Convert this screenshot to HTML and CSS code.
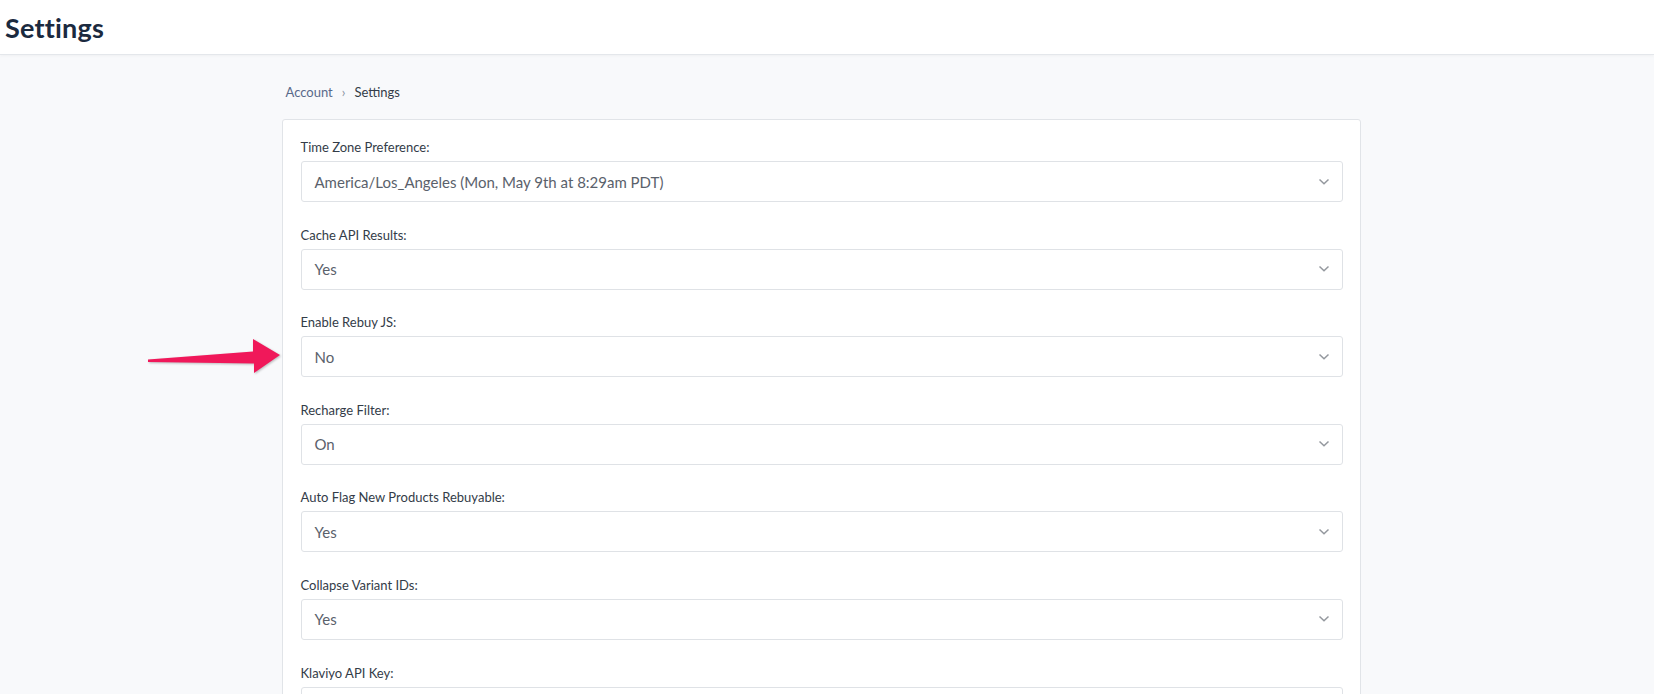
FILE: index.html
```html
<!DOCTYPE html>
<html lang="en">

<head>
    <meta charset="UTF-8">
    <meta name="viewport" content="width=device-width, initial-scale=1.0">
    <title>Settings</title>
    <link rel="stylesheet" href="styles.css">
</head>

<body>
    <header class="top-bar">
        <h1 class="page-title">Settings</h1>
    </header>

    <main class="main">
        <div class="content">

            <nav class="breadcrumb">
                <a href="#" class="crumb-link">Account</a>
                <span class="crumb-sep">&rsaquo;</span>
                <span class="crumb-current">Settings</span>
            </nav>

            <div class="card">
                <form action="#" class="settings-form">

                    <div class="field">
                        <label class="field-label">Time Zone Preference:</label>
                        <div class="select">
                            <span class="select-value">America/Los_Angeles (Mon, May 9th at 8:29am PDT)</span>
                            <svg class="chevron" viewBox="0 0 12 8" width="12" height="8"><path d="M1.5 1.5 L6 5.8 L10.5 1.5" /></svg>
                        </div>
                    </div>

                    <div class="field">
                        <label class="field-label">Cache API Results:</label>
                        <div class="select">
                            <span class="select-value">Yes</span>
                            <svg class="chevron" viewBox="0 0 12 8" width="12" height="8"><path d="M1.5 1.5 L6 5.8 L10.5 1.5" /></svg>
                        </div>
                    </div>

                    <div class="field">
                        <label class="field-label">Enable Rebuy JS:</label>
                        <div class="select">
                            <span class="select-value">No</span>
                            <svg class="chevron" viewBox="0 0 12 8" width="12" height="8"><path d="M1.5 1.5 L6 5.8 L10.5 1.5" /></svg>
                        </div>
                        <!-- annotation arrow pointing at this field -->
                        <svg class="arrow" viewBox="0 0 140 40" width="140" height="40">
                            <path d="M4 23.5 L109 15.5 L109 3 L136 19 L110 37 L110 27.5 L4 26 Z" />
                        </svg>
                    </div>

                    <div class="field">
                        <label class="field-label">Recharge Filter:</label>
                        <div class="select">
                            <span class="select-value">On</span>
                            <svg class="chevron" viewBox="0 0 12 8" width="12" height="8"><path d="M1.5 1.5 L6 5.8 L10.5 1.5" /></svg>
                        </div>
                    </div>

                    <div class="field">
                        <label class="field-label">Auto Flag New Products Rebuyable:</label>
                        <div class="select">
                            <span class="select-value">Yes</span>
                            <svg class="chevron" viewBox="0 0 12 8" width="12" height="8"><path d="M1.5 1.5 L6 5.8 L10.5 1.5" /></svg>
                        </div>
                    </div>

                    <div class="field">
                        <label class="field-label">Collapse Variant IDs:</label>
                        <div class="select">
                            <span class="select-value">Yes</span>
                            <svg class="chevron" viewBox="0 0 12 8" width="12" height="8"><path d="M1.5 1.5 L6 5.8 L10.5 1.5" /></svg>
                        </div>
                    </div>

                    <div class="field">
                        <label class="field-label">Klaviyo API Key:</label>
                        <div class="select input-box"></div>
                    </div>

                </form>
            </div>

        </div>
    </main>
</body>

</html>
```

FILE: styles.css
```css
html,
body {
    margin: 0;
    height: 100%;
}

body {
    background: #f8f9fb;
    font-family: Lato, "Open Sans", Arial, sans-serif;
    color: #333c48;
    overflow: hidden;
}

.top-bar {
    background: #ffffff;
    height: 54px;
    border-bottom: 1px solid #e4e7eb;
    box-shadow: 0 1px 3px rgba(0, 0, 0, 0.04);
    display: flex;
    align-items: center;
    padding-left: 5px;
}

.page-title {
    margin: 0;
    font-size: 27px;
    font-weight: 700;
    color: #1b2a3f;
    letter-spacing: 0.2px;
}

.main {
    padding-right: 12px;
}

.content {
    width: 1079px;
    margin: 0 auto;
}

.breadcrumb {
    padding: 28px 0 0 4px;
    height: 18px;
    margin-bottom: 18px;
    font-size: 13px;
    line-height: 18px;
    display: flex;
    gap: 9px;
}

.crumb-link {
    color: #586a8a;
    text-decoration: none;
}

.crumb-sep {
    color: #8a93a0;
}

.crumb-current {
    color: #333c48;
}

.card {
    background: #ffffff;
    border: 1px solid #e1e4e8;
    border-radius: 3px;
    padding: 18px 17px 0 18px;
    height: 700px;
}

.field {
    position: relative;
    margin-bottom: 23.6px;
}

.field-label {
    display: block;
    font-size: 13px;
    line-height: 18px;
    margin-bottom: 5px;
    color: #333c48;
}

.select {
    height: 39px;
    border: 1px solid #dfe2e6;
    border-radius: 3px;
    display: flex;
    align-items: center;
    justify-content: space-between;
    padding: 0 12px 0 13px;
    background: #ffffff;
}

.select-value {
    font-size: 15px;
    color: #5a616b;
}

.chevron {
    fill: none;
    stroke: #94989e;
    stroke-width: 1.5;
}

.arrow {
    position: absolute;
    left: -157px;
    top: 23px;
    fill: #f0185a;
    filter: drop-shadow(1px 1px 1px rgba(0, 0, 0, 0.25));
}
```
